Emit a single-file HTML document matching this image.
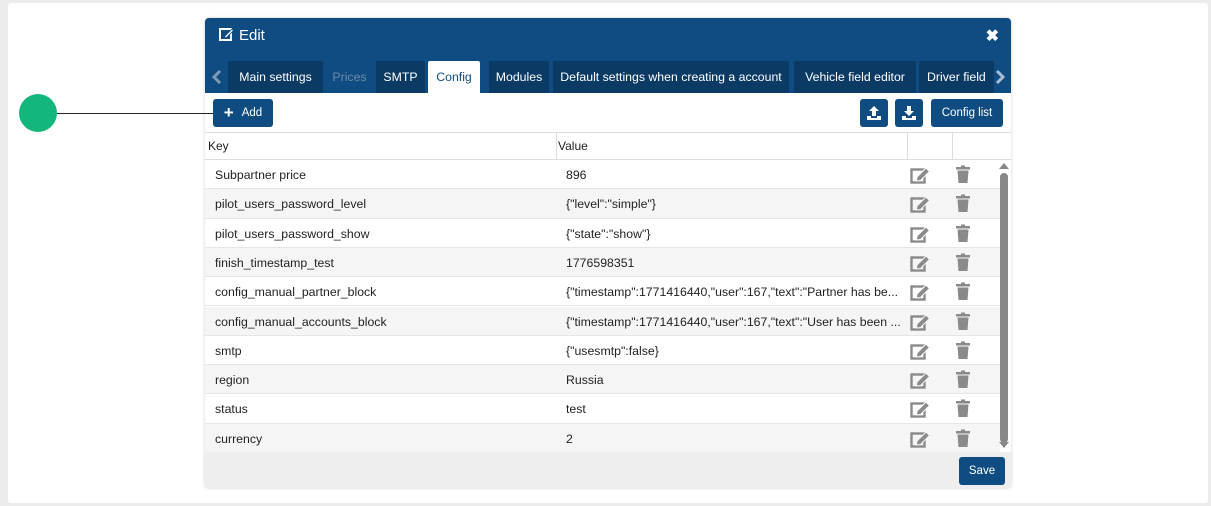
<!DOCTYPE html><html><head><style>
*{box-sizing:border-box;margin:0;padding:0}
body{width:1211px;height:506px;background:#ececec;font-family:"Liberation Sans",sans-serif;font-size:12px;color:#222;position:relative;overflow:hidden}
.outer{position:absolute;left:8px;top:3px;width:1200px;height:500px;background:#fff;border-radius:3px}
.dot{position:absolute;left:19px;top:94px;width:38px;height:38px;border-radius:50%;background:#13b77c}
.line{position:absolute;left:57px;top:113px;width:156px;height:1px;background:#222;z-index:5}
.modal{position:absolute;left:205px;top:18px;width:806px;height:470px;background:#fff;border-radius:4px;overflow:hidden;box-shadow:0 0 3px rgba(0,0,0,.2)}
.hdr{height:75px;background:#0f4c81;position:relative;color:#fff}
.title{position:absolute;left:14px;top:9px;font-size:15px}
.x{position:absolute;right:12px;top:8px;font-size:16px;font-weight:bold}
.tabs{position:absolute;left:0;top:43px;height:32px;width:806px}
.tab{position:absolute;top:0;height:32px;line-height:33px;text-align:center;background:#0b3a64;font-size:12.3px;color:#fff;border-radius:2px 2px 0 0;white-space:nowrap}
.btn{position:absolute;background:#0f4c81;color:#fff;border-radius:3px;text-align:center;font-size:11.5px}
.thead{position:absolute;top:114px;left:0;width:806px;height:28px;border-top:1px solid #ddd;border-bottom:1px solid #ddd}
.row{position:absolute;left:0;width:795px;height:29.3px;border-bottom:1px solid #e6e6e6;font-size:12.3px}
.row span{position:absolute;top:8px}
.foot{position:absolute;left:0;top:434px;width:806px;height:36px;background:#eee}
</style></head><body>
<div class="outer"></div>
<div class="dot"></div><div class="line"></div>
<div class="modal">
<div class="hdr">
<div class="title"><svg width="15" height="14" viewBox="0 0 15 14" style="vertical-align:-1px;margin-right:5px"><rect x="1" y="2" width="11" height="11" fill="none" stroke="#fff" stroke-width="2"/><path d="M6 9 L13 2 L14.5 3.5 L7.5 10.5 L5.5 11Z" fill="#fff" stroke="#0f4c81" stroke-width=".8"/></svg>Edit</div>
<div class="x">✖</div>
<div class="tabs">
<svg style="position:absolute;left:7px;top:9px" width="10" height="14" viewBox="0 0 10 14"><path d="M8 1 L2 7 L8 13" fill="none" stroke="#7e9ab5" stroke-width="3"/></svg>
<div class="tab" style="left:23px;width:95px">Main settings</div>
<div class="tab" style="left:118px;width:53px;background:none;color:#6e8aa8">Prices</div>
<div class="tab" style="left:171px;width:49px">SMTP</div>
<div class="tab" style="left:223px;width:52px;background:#fff;color:#0f4c81">Config</div>
<div class="tab" style="left:284px;width:60px">Modules</div>
<div class="tab" style="left:348px;width:236px">Default settings when creating a account</div>
<div class="tab" style="left:589px;width:122px">Vehicle field editor</div>
<div class="tab" style="left:714px;width:75px;text-align:left;padding-left:8px;overflow:hidden">Driver field</div>
<svg style="position:absolute;left:790px;top:9px" width="10" height="14" viewBox="0 0 10 14"><path d="M2 1 L8 7 L2 13" fill="none" stroke="#a9bdd1" stroke-width="3"/></svg>
</div></div>
<div class="btn" style="left:8px;top:81px;width:60px;height:28px;line-height:28px"><b style="font-size:17px;vertical-align:-2px;margin-right:8px">+</b>Add</div>
<div class="btn" style="left:655px;top:81px;width:28px;height:28px"><svg width="16" height="16" viewBox="0 0 16 16" style="margin-top:6px"><path d="M8 1 L13 6 H10 V11 H6 V6 H3Z M1 11 H5 V13 H11 V11 H15 V15 H1Z" fill="#fff"/></svg></div>
<div class="btn" style="left:690px;top:81px;width:28px;height:28px"><svg width="16" height="16" viewBox="0 0 16 16" style="margin-top:6px"><path d="M6 1 H10 V6 H13 L8 11 L3 6 H6Z M1 11 H5 V13 H11 V11 H15 V15 H1Z" fill="#fff"/></svg></div>
<div class="btn" style="left:726px;top:81px;width:72px;height:28px;line-height:28px">Config list</div>
<div class="thead"><span style="position:absolute;left:3px;top:6px">Key</span><span style="position:absolute;left:353px;top:6px">Value</span>
<div style="position:absolute;left:351px;top:0;width:1px;height:27px;background:#ddd"></div>
<div style="position:absolute;left:702px;top:0;width:1px;height:27px;background:#ddd"></div>
<div style="position:absolute;left:747px;top:0;width:1px;height:27px;background:#ddd"></div></div>
<div id="rows"></div>
<div style="position:absolute;left:795px;top:155px;width:8px;height:270px;background:#888;border-radius:4px"></div>
<div style="position:absolute;left:794px;top:145px;width:0;height:0;border:5px solid transparent;border-bottom:6px solid #888;border-top:0"></div>
<div style="position:absolute;left:794px;top:424px;width:0;height:0;border:5px solid transparent;border-top:6px solid #888;border-bottom:0"></div>
<div class="foot"><div class="btn" style="left:754px;top:5px;width:46px;height:28px;line-height:28px">Save</div></div>
</div>
<script>
var d=[["Subpartner price","896"],["pilot_users_password_level",'{"level":"simple"}'],["pilot_users_password_show",'{"state":"show"}'],["finish_timestamp_test","1776598351"],["config_manual_partner_block",'{"timestamp":1771416440,"user":167,"text":"Partner has be...'],["config_manual_accounts_block",'{"timestamp":1771416440,"user":167,"text":"User has been ...'],["smtp",'{"usesmtp":false}'],["region","Russia"],["status","test"],["currency","2"]];
var h="";d.forEach(function(r,i){var t=142+i*29.3;var bg=(i%2?'#f5f5f5':'#fff');
h+='<div class="row" style="top:'+t+'px;background:'+bg+'"><span style="left:10px">'+r[0]+'</span><span style="left:361px;white-space:nowrap;width:335px;overflow:hidden">'+r[1].replace(/</g,'&lt;')+'</span>'+
'<svg style="position:absolute;left:705px;top:5px" width="22" height="20" viewBox="0 0 22 20"><rect x="1.5" y="4.5" width="13" height="13" fill="none" stroke="#8a8a8a" stroke-width="2.4"/><path d="M7 12 L16 3 L19.5 6.5 L10.5 15.5 L6.5 16Z" fill="#8a8a8a" stroke="'+bg+'" stroke-width="1"/></svg>'+
'<svg style="position:absolute;left:750px;top:5px" width="16" height="19" viewBox="0 0 16 19"><rect x="1" y="2" width="14" height="2.5" fill="#8a8a8a"/><rect x="6" y="0.5" width="4" height="2" fill="#8a8a8a"/><path d="M2.5 5.5 H13.5 L12.5 18 H3.5Z" fill="#8a8a8a"/></svg></div>'});
document.getElementById("rows").innerHTML=h;
</script>
</body></html>
